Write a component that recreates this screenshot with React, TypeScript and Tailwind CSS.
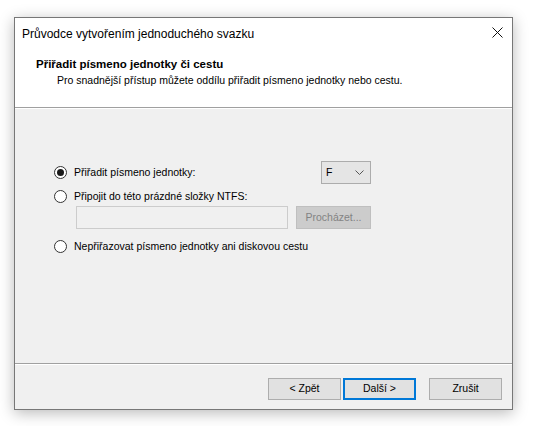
type Option = {
  key: string;
  label: string;
  checked?: boolean;
};

const font = "font-['Liberation_Sans',Arial,sans-serif]";

function Radio({ checked }: { checked?: boolean }) {
  return (
    <span className="w-[13px] h-[13px] rounded-full border border-[#333] bg-white flex items-center justify-center shrink-0">
      {checked && <span className="w-[7px] h-[7px] rounded-full bg-[#1a1a1a]" />}
    </span>
  );
}

function RadioRow({ label, checked }: Option) {
  return (
    <div className="flex items-center gap-[7px] h-[14px]">
      <Radio checked={checked} />
      <span className="text-[10.5px] text-black leading-none">{label}</span>
    </div>
  );
}

function WizardButton({ children, primary }: { children: React.ReactNode; primary?: boolean }) {
  return (
    <button
      className={
        primary
          ? "flex items-center justify-center w-[73px] h-[22px] bg-[#e1e1e1] border-2 border-[#0078d7] text-[10.5px] text-black"
          : "flex items-center justify-center w-[73px] h-[22px] bg-[#e1e1e1] border border-[#adadad] text-[10.5px] text-black"
      }
    >
      {children}
    </button>
  );
}

export default function App() {
  return (
    <div className={`w-[535px] h-[426px] bg-white pl-[14px] pt-[17px] ${font}`}>
      <div className="w-[499px] h-[393px] border border-[#777] flex flex-col shadow-[0_3px_14px_rgba(0,0,0,0.28)] bg-[#f0f0f0]">
        {/* title bar */}
        <div className="h-[30px] bg-white flex items-center justify-between pl-[7px] pr-[9px]">
          <span className="text-[12px] text-black mt-[1px]">Průvodce vytvořením jednoduchého svazku</span>
          <svg width="11" height="11" viewBox="0 0 11 11" className="mt-[-2px]">
            <path d="M0.5 0.5 L10.5 10.5 M10.5 0.5 L0.5 10.5" stroke="#111" strokeWidth="1" />
          </svg>
        </div>

        {/* header */}
        <div className="h-[59px] bg-white pl-[21px] pt-[10px] flex flex-col">
          <span className="text-[11.5px] font-bold text-black leading-[13px]">
            Přiřadit písmeno jednotky či cestu
          </span>
          <span className="text-[10.5px] text-black leading-[13px] pl-[21px] mt-[3px]">
            Pro snadnější přístup můžete oddílu přiřadit písmeno jednotky nebo cestu.
          </span>
        </div>
        <div className="h-px bg-[#a0a0a0]" />
        <div className="h-px bg-white" />

        {/* body */}
        <div className="flex-1 pl-[39px] pt-[52px]">
          <div className="w-[317px] flex items-center justify-between h-[23px]">
            <RadioRow key="assign" label="Přiřadit písmeno jednotky:" checked />
            <div className="w-[50px] h-[23px] bg-[#e5e5e5] border border-[#acacac] flex items-center justify-between pl-[4px] pr-[6px]">
              <span className="text-[10.5px] text-black">F</span>
              <svg width="9" height="5" viewBox="0 0 9 5">
                <path d="M0.5 0.5 L4.5 4.5 L8.5 0.5" stroke="#555" strokeWidth="1" fill="none" />
              </svg>
            </div>
          </div>

          <div className="mt-[5px]">
            <RadioRow key="mount" label="Připojit do této prázdné složky NTFS:" />
          </div>

          <div className="flex gap-[8px] mt-[3px] pl-[22px]">
            <div className="w-[212px] h-[23px] bg-[#f0f0f0] border border-[#cccccc]" />
            <div className="w-[75px] h-[23px] bg-[#cccccc] border border-[#bfbfbf] flex items-center justify-center">
              <span className="text-[10.5px] text-[#838383]">Procházet...</span>
            </div>
          </div>

          <div className="mt-[10px]">
            <RadioRow key="none" label="Nepřiřazovat písmeno jednotky ani diskovou cestu" />
          </div>
        </div>

        {/* footer */}
        <div className="h-px bg-[#a0a0a0]" />
        <div className="h-px bg-white" />
        <div className="h-[44px] flex items-start justify-end pt-[13px] pr-[10px] gap-[13px]">
          <div className="flex gap-[2px]">
            <WizardButton>&lt; Zpět</WizardButton>
            <WizardButton primary>Další &gt;</WizardButton>
          </div>
          <WizardButton>Zrušit</WizardButton>
        </div>
      </div>
    </div>
  );
}
